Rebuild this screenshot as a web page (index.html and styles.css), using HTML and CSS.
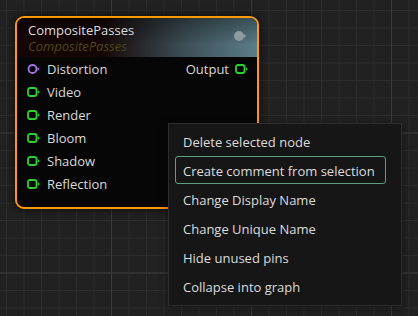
FILE: index.html
```html
<!DOCTYPE html>
<html lang="en">
<head>
    <meta charset="UTF-8">
    <title>Node Graph</title>
    <link rel="stylesheet" href="styles.css">
</head>
<body>

<div class="canvas">
    <!-- Node -->
    <div class="node">
        <div class="node-header">
            <div class="node-title">CompositePasses</div>
            <div class="node-subtitle">CompositePasses</div>
            <svg class="preview-toggle" width="14" height="12" viewBox="0 0 14 12">
                <circle cx="6" cy="6" r="5" fill="#8c9ba1"/>
                <path d="M11 4 L13 6 L11 8 Z" fill="#8c9ba1"/>
            </svg>
        </div>
        <div class="node-body">
            <div class="pin-row">
                <div class="pin">
                    <svg width="14" height="12" viewBox="0 0 14 12">
                        <circle cx="5.5" cy="6" r="4" fill="none" stroke="#a274e6" stroke-width="1.8"/>
                        <path d="M10.5 4 L12.5 6 L10.5 8 Z" fill="#a274e6"/>
                    </svg>
                    <span>Distortion</span>
                </div>
                <div class="pin pin-out">
                    <span>Output</span>
                    <svg width="14" height="12" viewBox="0 0 14 12">
                        <rect x="1" y="2" width="8.5" height="8" rx="2" fill="none" stroke="#2fd033" stroke-width="1.8"/>
                        <path d="M10.8 4 L12.8 6 L10.8 8 Z" fill="#2fd033"/>
                    </svg>
                </div>
            </div>
            <div class="pin-row">
                <div class="pin">
                    <svg width="14" height="12" viewBox="0 0 14 12">
                        <rect x="1" y="2" width="8.5" height="8" rx="2" fill="none" stroke="#2fd033" stroke-width="1.8"/>
                        <path d="M10.8 4 L12.8 6 L10.8 8 Z" fill="#2fd033"/>
                    </svg>
                    <span>Video</span>
                </div>
            </div>
            <div class="pin-row">
                <div class="pin">
                    <svg width="14" height="12" viewBox="0 0 14 12">
                        <rect x="1" y="2" width="8.5" height="8" rx="2" fill="none" stroke="#2fd033" stroke-width="1.8"/>
                        <path d="M10.8 4 L12.8 6 L10.8 8 Z" fill="#2fd033"/>
                    </svg>
                    <span>Render</span>
                </div>
            </div>
            <div class="pin-row">
                <div class="pin">
                    <svg width="14" height="12" viewBox="0 0 14 12">
                        <rect x="1" y="2" width="8.5" height="8" rx="2" fill="none" stroke="#2fd033" stroke-width="1.8"/>
                        <path d="M10.8 4 L12.8 6 L10.8 8 Z" fill="#2fd033"/>
                    </svg>
                    <span>Bloom</span>
                </div>
            </div>
            <div class="pin-row">
                <div class="pin">
                    <svg width="14" height="12" viewBox="0 0 14 12">
                        <rect x="1" y="2" width="8.5" height="8" rx="2" fill="none" stroke="#2fd033" stroke-width="1.8"/>
                        <path d="M10.8 4 L12.8 6 L10.8 8 Z" fill="#2fd033"/>
                    </svg>
                    <span>Shadow</span>
                </div>
            </div>
            <div class="pin-row">
                <div class="pin">
                    <svg width="14" height="12" viewBox="0 0 14 12">
                        <rect x="1" y="2" width="8.5" height="8" rx="2" fill="none" stroke="#2fd033" stroke-width="1.8"/>
                        <path d="M10.8 4 L12.8 6 L10.8 8 Z" fill="#2fd033"/>
                    </svg>
                    <span>Reflection</span>
                </div>
            </div>
        </div>
    </div>

    <!-- Context menu -->
    <div class="context-menu">
        <div class="menu-item">Delete selected node</div>
        <div class="menu-item active">Create comment from selection</div>
        <div class="menu-item">Change Display Name</div>
        <div class="menu-item">Change Unique Name</div>
        <div class="menu-item">Hide unused pins</div>
        <div class="menu-item">Collapse into graph</div>
    </div>
</div>

</body>
</html>
```

FILE: styles.css
```css
body {
    margin: 0;
    font-family: "Open Sans", "Noto Sans", sans-serif;
    font-size: 13px;
    color: #d9d9d9;
    background-color: #212121;
}
.canvas {
    position: relative;
    width: 418px;
    height: 316px;
    overflow: hidden;
    background-color: #212121;
    background-image:
        linear-gradient(to right, #3a3a3a 1px, transparent 1px),
        linear-gradient(to bottom, #3a3a3a 1px, transparent 1px),
        linear-gradient(to right, #2c2c2c 1px, transparent 1px),
        linear-gradient(to bottom, #2c2c2c 1px, transparent 1px);
    background-size: 140px 140px, 140px 140px, 17.5px 17.5px, 17.5px 17.5px;
    background-position: 111px 0, 0 132.5px, 6px 0, 0 10px;
}
.node {
    position: absolute;
    left: 15px;
    top: 16px;
    width: 240px;
    border: 2px solid #ff9a00;
    border-radius: 9px;
    background-color: #060606;
    box-shadow: 0 0 10px rgba(0, 0, 0, 0.7);
    overflow: hidden;
}
.node-header {
    position: relative;
    height: 32px;
    padding: 4px 11px 3px;
    line-height: 16px;
    background:
        linear-gradient(to bottom, rgba(0, 0, 0, 0.35), rgba(0, 0, 0, 0) 70%),
        linear-gradient(to right, #150606 35%, #3d4f57 70%, #5b7d88 100%);
}
.node-title {
    color: #dcdcdc;
}
.node-subtitle {
    color: #4a4714;
    font-style: italic;
}
.preview-toggle {
    position: absolute;
    right: 10px;
    top: 12px;
}
.node-body {
    padding: 0 8px 12px 10px;
}
.pin-row {
    display: flex;
    justify-content: space-between;
    align-items: center;
    height: 23px;
}
.pin {
    display: flex;
    align-items: center;
    gap: 6px;
}
.pin svg {
    display: block;
}
.context-menu {
    position: absolute;
    left: 168px;
    top: 123px;
    width: 211px;
    padding: 3px 15px 5px 6px;
    background-color: #161616;
    border: 1px solid #2c2c2c;
    display: flex;
    flex-direction: column;
    gap: 1px;
    box-shadow: 0 2px 8px rgba(0, 0, 0, 0.4);
}
.menu-item {
    height: 28px;
    line-height: 28px;
    padding: 0 7px;
    border: 1px solid transparent;
    border-radius: 3px;
    box-sizing: border-box;
    color: #dcdcdc;
    white-space: nowrap;
}
.menu-item.active {
    border-color: #5f9f7d;
}
```
